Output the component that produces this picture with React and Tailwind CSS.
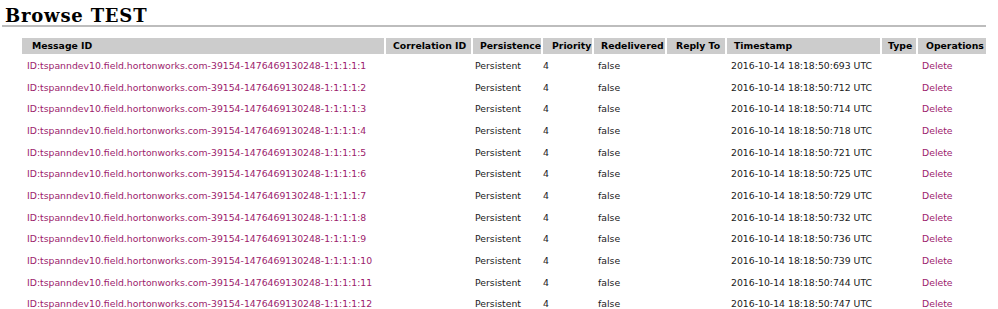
const rows = [
  { n: 1, ts: "693" },
  { n: 2, ts: "712" },
  { n: 3, ts: "714" },
  { n: 4, ts: "718" },
  { n: 5, ts: "721" },
  { n: 6, ts: "725" },
  { n: 7, ts: "729" },
  { n: 8, ts: "732" },
  { n: 9, ts: "736" },
  { n: 10, ts: "739" },
  { n: 11, ts: "744" },
  { n: 12, ts: "747" },
];

const headers = [
  { label: "Message ID", w: "w-[362px]", pl: "pl-[10px]" },
  { label: "Correlation ID", w: "w-[85px]", pl: "pl-[7px]" },
  { label: "Persistence", w: "w-[68px]", pl: "pl-[7px]" },
  { label: "Priority", w: "w-[49px]", pl: "pl-[9px]" },
  { label: "Redelivered", w: "w-[71px]", pl: "pl-[7px]" },
  { label: "Reply To", w: "w-[58px]", pl: "pl-[9px]" },
  { label: "Timestamp", w: "w-[153px]", pl: "pl-[7px]" },
  { label: "Type", w: "w-[34px]", pl: "pl-[6px]" },
  { label: "Operations", w: "w-[68px]", pl: "pl-[8px]" },
];

export default function App() {
  return (
    <div className="w-[998px] h-[309px] overflow-hidden bg-white text-[#1a1a1a] font-['DejaVu_Sans',Verdana,sans-serif] text-[9.3px]">
      {/* TITLE */}
      <h2 className="pl-[5px] pt-[5px] h-[25px] text-[18px] leading-[22px] tracking-[0.8px] font-bold text-black font-['DejaVu_Serif',Georgia,serif]">
        Browse TEST
      </h2>
      <div className="ml-[2px] w-[984px] h-[2px] bg-[#bdbdbd]" />

      {/* TABLE */}
      <table className="mt-[9px] ml-[20px] w-[968px] table-fixed border-separate border-spacing-[2px]">
        <colgroup>
          {headers.map((h) => (
            <col key={h.label} className={h.w} />
          ))}
        </colgroup>
        <thead>
          <tr className="h-[16px]">
            {headers.map((h) => (
              <th key={h.label} className={`${h.pl} bg-[#cccccc] text-left font-bold text-black leading-[16px] whitespace-nowrap overflow-hidden`}>
                {h.label}
              </th>
            ))}
          </tr>
        </thead>
        <tbody>
          {rows.map((r) => (
            <tr key={r.n} className="h-[19.7px]">
              <td className="pl-[5px] whitespace-nowrap">
                <a href="#" className="text-[#9c1b6c]">
                  ID:tspanndev10.field.hortonworks.com-39154-1476469130248-1:1:1:1:{r.n}
                </a>
              </td>
              <td></td>
              <td className="pl-[2px]">Persistent</td>
              <td className="pl-0">4</td>
              <td className="pl-[4px]">false</td>
              <td></td>
              <td className="pl-[4px] whitespace-nowrap">2016-10-14 18:18:50:{r.ts} UTC</td>
              <td></td>
              <td className="pl-[4px]">
                <a href="#" className="text-[#9c1b6c]">Delete</a>
              </td>
            </tr>
          ))}
        </tbody>
      </table>
    </div>
  );
}
